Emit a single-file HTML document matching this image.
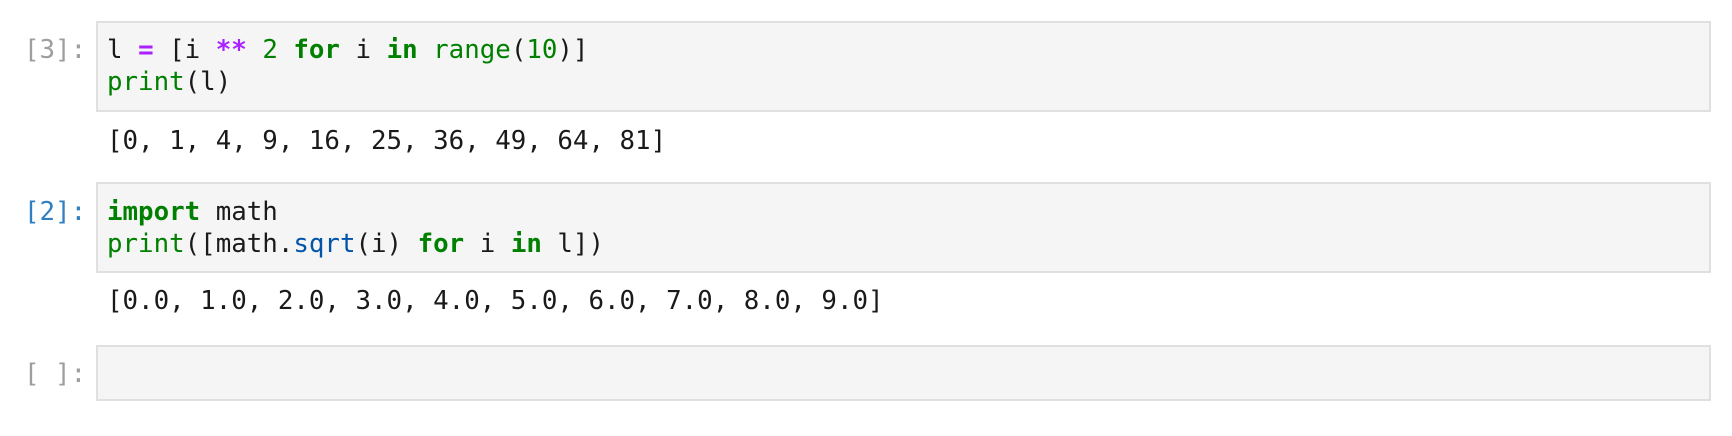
<!DOCTYPE html>
<html><head><style>
body{margin:0;width:1732px;height:436px;background:#fff;font-family:"DejaVu Sans Mono","Liberation Mono",monospace;font-size:25.8px;position:relative;overflow:hidden}
.box{position:absolute;left:96px;width:1611px;background:#f5f5f5;border:2px solid #e0e0e0}
.t{position:absolute;white-space:pre;line-height:32px;color:#1a1a1a}
.p{position:absolute;white-space:pre;line-height:32px;color:#9e9e9e}
.k{color:#008000;font-weight:bold}.g{color:#008000}.o{color:#aa22ff;font-weight:bold}.b{color:#0055aa}
</style></head><body>
<div class="box" style="top:21px;height:87px"></div>
<div class="p" style="left:24px;top:34px">[3]:</div>
<div class="t" style="left:107px;top:34px">l <span class="o">=</span> [i <span class="o">**</span> <span class="g">2</span> <span class="k">for</span> i <span class="k">in</span> <span class="g">range</span>(<span class="g">10</span>)]
<span class="g">print</span>(l)</div>
<div class="t" style="left:107px;top:125px">[0, 1, 4, 9, 16, 25, 36, 49, 64, 81]</div>
<div class="box" style="top:182px;height:87px"></div>
<div class="p" style="left:24px;top:196px;color:#307fc1">[2]:</div>
<div class="t" style="left:107px;top:196px"><span class="k">import</span> math
<span class="g">print</span>([math.<span class="b">sqrt</span>(i) <span class="k">for</span> i <span class="k">in</span> l])</div>
<div class="t" style="left:107px;top:285px">[0.0, 1.0, 2.0, 3.0, 4.0, 5.0, 6.0, 7.0, 8.0, 9.0]</div>
<div class="box" style="top:345px;height:52px"></div>
<div class="p" style="left:24px;top:358px">[ ]:</div>
</body></html>
